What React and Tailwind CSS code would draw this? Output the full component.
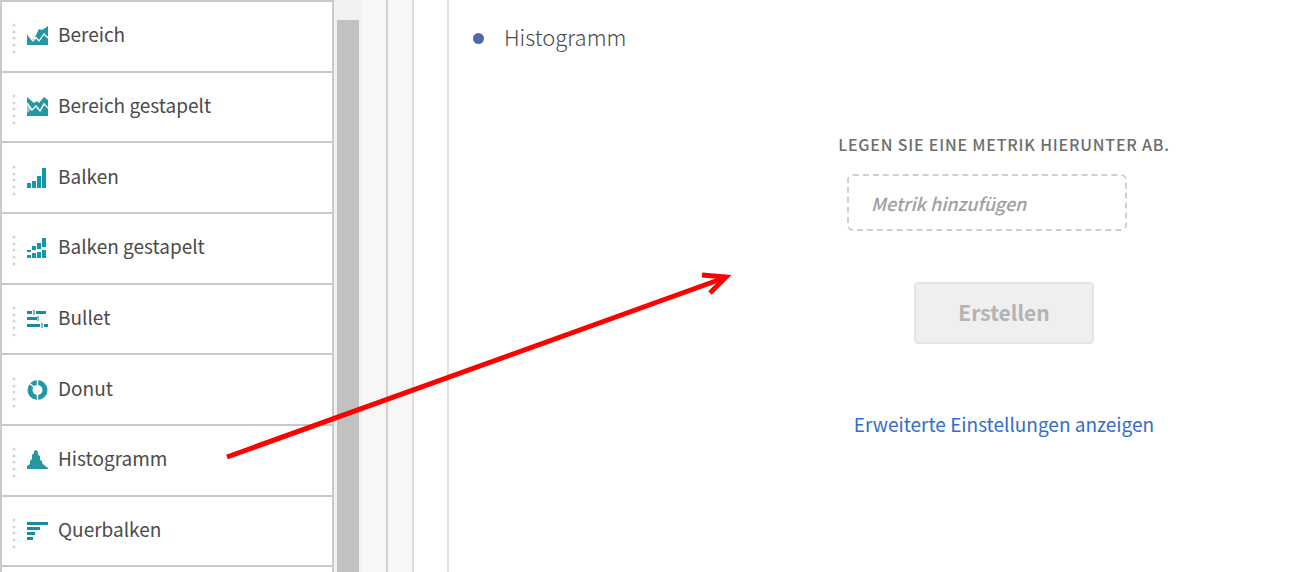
import React from "react";

const AreaIcon = () => (
  <>
    <path d="M0 8L2 10L5 13H7L12 3L15 4L21 0V19H0Z" fill="#2398a3" />
    <path d="M1 9L6 15L9 11.5L12 15L17 8L21 12" fill="none" stroke="#fff" strokeWidth="1.2" />
  </>
);

const StackedAreaIcon = () => (
  <>
    <path d="M0 0L7 6L10 4L12 6L17 0L21 3V19H0Z" fill="#2398a3" />
    <path d="M0 6L5 13L9 9L13 14L17 7L21 11" fill="none" stroke="#fff" strokeWidth="1.4" />
    <path d="M0 7L4 13L0 16Z" fill="#fff" opacity=".5" />
  </>
);

const BarIcon = () => (
  <path d="M0 15h4v5H0zM5 13h4v7H5zM10 8h4v12h-4zM15 0h4v20h-4z" fill="#109aa8" />
);

const StackedBarIcon = () => (
  <path
    d="M0 17h4v3H0zM5 15h4v5H5zM10 14h4v6h-4zM15 12h4v8h-4zM0 12h4v2H0zM5 8h4v4H5zM10 5h4v6h-4zM15 0h4v9h-4z"
    fill="#109aa8"
  />
);

const BulletIcon = () => (
  <>
    <path d="M0 2h5v3H0zM9 2h10v3H9zM0 8h10v3H0zM0 15h13v3H0zM17 15h4v3h-4z" fill="#128f9a" />
    <path d="M6 1h2v5H6zM10 7h2v5h-2zM14 14h2v5h-2z" fill="#7fc0c6" />
  </>
);

const DonutIcon = () => (
  <>
    <circle cx="10.5" cy="10" r="7.5" fill="none" stroke="#2398a3" strokeWidth="5" />
    <path d="M10.5 -1V6M10.5 14V21M2 3L7 7" stroke="#fff" strokeWidth="1.4" />
  </>
);

const HistogramIcon = () => (
  <path
    d="M0 19V16L3 14V11L5 9V5L7 3V1L9 0L11 2V5L13 6V10L15 11V13L17 15L21 18V19Z"
    fill="#2398a3"
  />
);

const HorizontalBarIcon = () => (
  <path d="M0 1h21v3H0zM0 6h13v3H0zM0 11h8v3H0zM0 16h6v3H0z" fill="#128f9a" />
);

const visualizations = [
  { label: "Bereich", Icon: AreaIcon },
  { label: "Bereich gestapelt", Icon: StackedAreaIcon },
  { label: "Balken", Icon: BarIcon },
  { label: "Balken gestapelt", Icon: StackedBarIcon },
  { label: "Bullet", Icon: BulletIcon },
  { label: "Donut", Icon: DonutIcon },
  { label: "Histogramm", Icon: HistogramIcon },
  { label: "Querbalken", Icon: HorizontalBarIcon },
];

const DragHandle = () => (
  <svg className="mt-1 h-8 w-1 shrink-0" viewBox="0 0 4 32" aria-hidden="true">
    {[3, 10, 16, 23, 30].map((y) => (
      <circle key={y} cx="2" cy={y} r="1.5" fill="#d5d5d8" />
    ))}
  </svg>
);

function VisualizationList() {
  return (
    <ul className="grid h-[636px] w-[334px] shrink-0 grid-rows-9">
      {visualizations.map(({ label, Icon }) => (
        <li
          key={label}
          className="flex items-center border-x-2 border-t-2 border-[#c9c9c9] bg-white pl-[10px]"
        >
          <DragHandle />
          <svg className="ml-[11px] h-5 w-[22px] shrink-0" viewBox="0 0 22 20" aria-hidden="true">
            <Icon />
          </svg>
          <span className="mb-1 ml-[9px] text-[19px] leading-7 text-[#4b4b4b]">{label}</span>
        </li>
      ))}
      <li className="border-x-2 border-t-2 border-[#c9c9c9] bg-white" />
    </ul>
  );
}

export default function App() {
  return (
    <div className="relative flex h-screen overflow-hidden bg-white font-['Noto_Sans_CJK_SC','Noto_Sans',sans-serif]">
      <VisualizationList />
      <div className="w-7 shrink-0 bg-[#f1f1f1] pt-5 pl-[3px]">
        <div className="h-full w-[22px] bg-[#c1c1c1]" />
      </div>
      <div className="w-[26px] shrink-0 border-r-2 border-[#d2d2d2] bg-[#f7f7f7]" />
      <div className="w-[26px] shrink-0 border-r-2 border-[#dcdcdc] bg-[#f7f7f7]" />
      <main className="ml-[33px] flex-1 border-l-2 border-[#e0e0e0] pl-6">
        <h1 className="flex items-center gap-5 pt-[18px] text-[22px] leading-9 font-light text-[#4b4b4b]">
          <span className="mt-1 size-[11px] rounded-full bg-[#5468a9]" />
          Histogramm
        </h1>
        <form className="ml-[366px] flex w-[330px] flex-col items-center pt-[78px]">
          <label
            htmlFor="metric"
            className="text-base leading-6 font-medium tracking-wider whitespace-nowrap text-[#6e6e6e] uppercase"
          >
            Legen Sie eine Metrik hierunter ab.
          </label>
          <input
            id="metric"
            placeholder="Metrik hinzufügen"
            className="mt-[18px] ml-2 h-[57px] w-[280px] self-start rounded-md border-2 border-dashed border-[#d0d0d0] px-[22px] text-[18px] italic placeholder:font-medium placeholder:text-[#a0a0a0]"
          />
          <button
            type="button"
            disabled
            className="mt-[51px] h-[62px] w-[180px] rounded-sm border-2 border-[#e4e4e4] bg-[#efefef] text-[21px] font-bold text-[#b3b3b3]"
          >
            Erstellen
          </button>
          <a href="#settings" className="mt-[66px] text-[19px] leading-7 whitespace-nowrap text-[#326ec8]">
            Erweiterte Einstellungen anzeigen
          </a>
        </form>
      </main>
      <svg
        className="pointer-events-none absolute top-[260px] left-[220px] h-[210px] w-[520px]"
        viewBox="220 260 520 210"
        fill="none"
        stroke="#ff0000"
        strokeWidth="5"
        aria-hidden="true"
      >
        <path d="M227 457L724 278" />
        <path d="M702 275L726 277L710 293" />
      </svg>
    </div>
  );
}
